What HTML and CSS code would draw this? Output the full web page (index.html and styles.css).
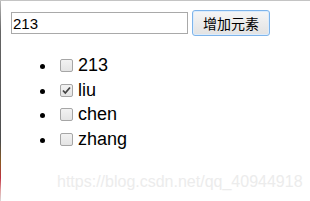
FILE: index.html
```html
<!DOCTYPE html>
<html>
<head>
<meta charset="utf-8">
<link rel="stylesheet" href="styles.css">
</head>
<body>
<div class="page">
  <div class="toolbar">
    <input class="field" type="text" value="213">
    <button class="add-btn">增加元素</button>
  </div>
  <ul class="items">
    <li><input type="checkbox" class="chk"><span>213</span></li>
    <li><input type="checkbox" class="chk" checked><span>liu</span></li>
    <li><input type="checkbox" class="chk"><span>chen</span></li>
    <li><input type="checkbox" class="chk"><span>zhang</span></li>
  </ul>
  <div class="watermark">https://blog.csdn.net/qq_40944918</div>
</div>
</body>
</html>
```
FILE: styles.css
```css
html, body {
  margin: 0;
  padding: 0;
  background: #fff;
}
.page {
  position: relative;
  width: 310px;
  height: 201px;
  box-sizing: border-box;
  border-top: 1px solid #c4c4c4;
  padding: 9px 0 0 11px;
  overflow: hidden;
  font-family: "Liberation Sans", Arial, sans-serif;
}
.page::before {
  content: "";
  position: absolute;
  left: 0;
  top: 0;
  width: 1px;
  height: 201px;
  background: linear-gradient(#b8b8b8 0%, #666 15%, #4a4a4a 70%, #8a5a20 80%, #c03040 88%, #e0a0a0 94%, #ddd 100%);
}
.toolbar {
  display: flex;
  align-items: center;
  gap: 4px;
}
.field {
  width: 177px;
  height: 22px;
  box-sizing: border-box;
  margin: 0;
  border: 1px solid #a9a9a9;
  padding: 0 1px;
  font-family: "Liberation Sans", Arial, sans-serif;
  font-size: 15px;
  color: #000;
  outline: none;
}
.add-btn {
  width: 78px;
  height: 26px;
  box-sizing: border-box;
  margin: 0;
  padding: 0;
  border: 1px solid #7eb4ea;
  border-radius: 3px;
  background: linear-gradient(#f6f6f6, #e2e2e2);
  box-shadow: inset 0 0 0 1px #dcecfc;
  font-family: "Noto Sans CJK SC", sans-serif;
  font-size: 14px;
  color: #000;
}
.items {
  margin: 17px 0 0 0;
  padding-left: 46px;
  font-size: 18px;
  line-height: 24.5px;
  color: #000;
}
.items li {
  list-style: disc outside;
}
.chk {
  -webkit-appearance: none;
  appearance: none;
  box-sizing: border-box;
  width: 13px;
  height: 13px;
  margin: 0 5px 0 3px;
  border: 1px solid #a6a6a6;
  border-radius: 2px;
  background: linear-gradient(#f2f2f2, #e4e4e4);
  vertical-align: -1px;
}
.chk:checked {
  background:
    url("data:image/svg+xml;utf8,<svg xmlns='http://www.w3.org/2000/svg' width='11' height='11' viewBox='0 0 11 11'><path d='M2 5.5 L4.3 8 L9 2.5' fill='none' stroke='%23444' stroke-width='1.8'/></svg>") center / 11px 11px no-repeat,
    linear-gradient(#f2f2f2, #e4e4e4);
}
.watermark {
  position: absolute;
  left: 57px;
  top: 172px;
  font-family: "Liberation Sans", Arial, sans-serif;
  font-size: 16px;
  color: #ececec;
  white-space: nowrap;
}
```
